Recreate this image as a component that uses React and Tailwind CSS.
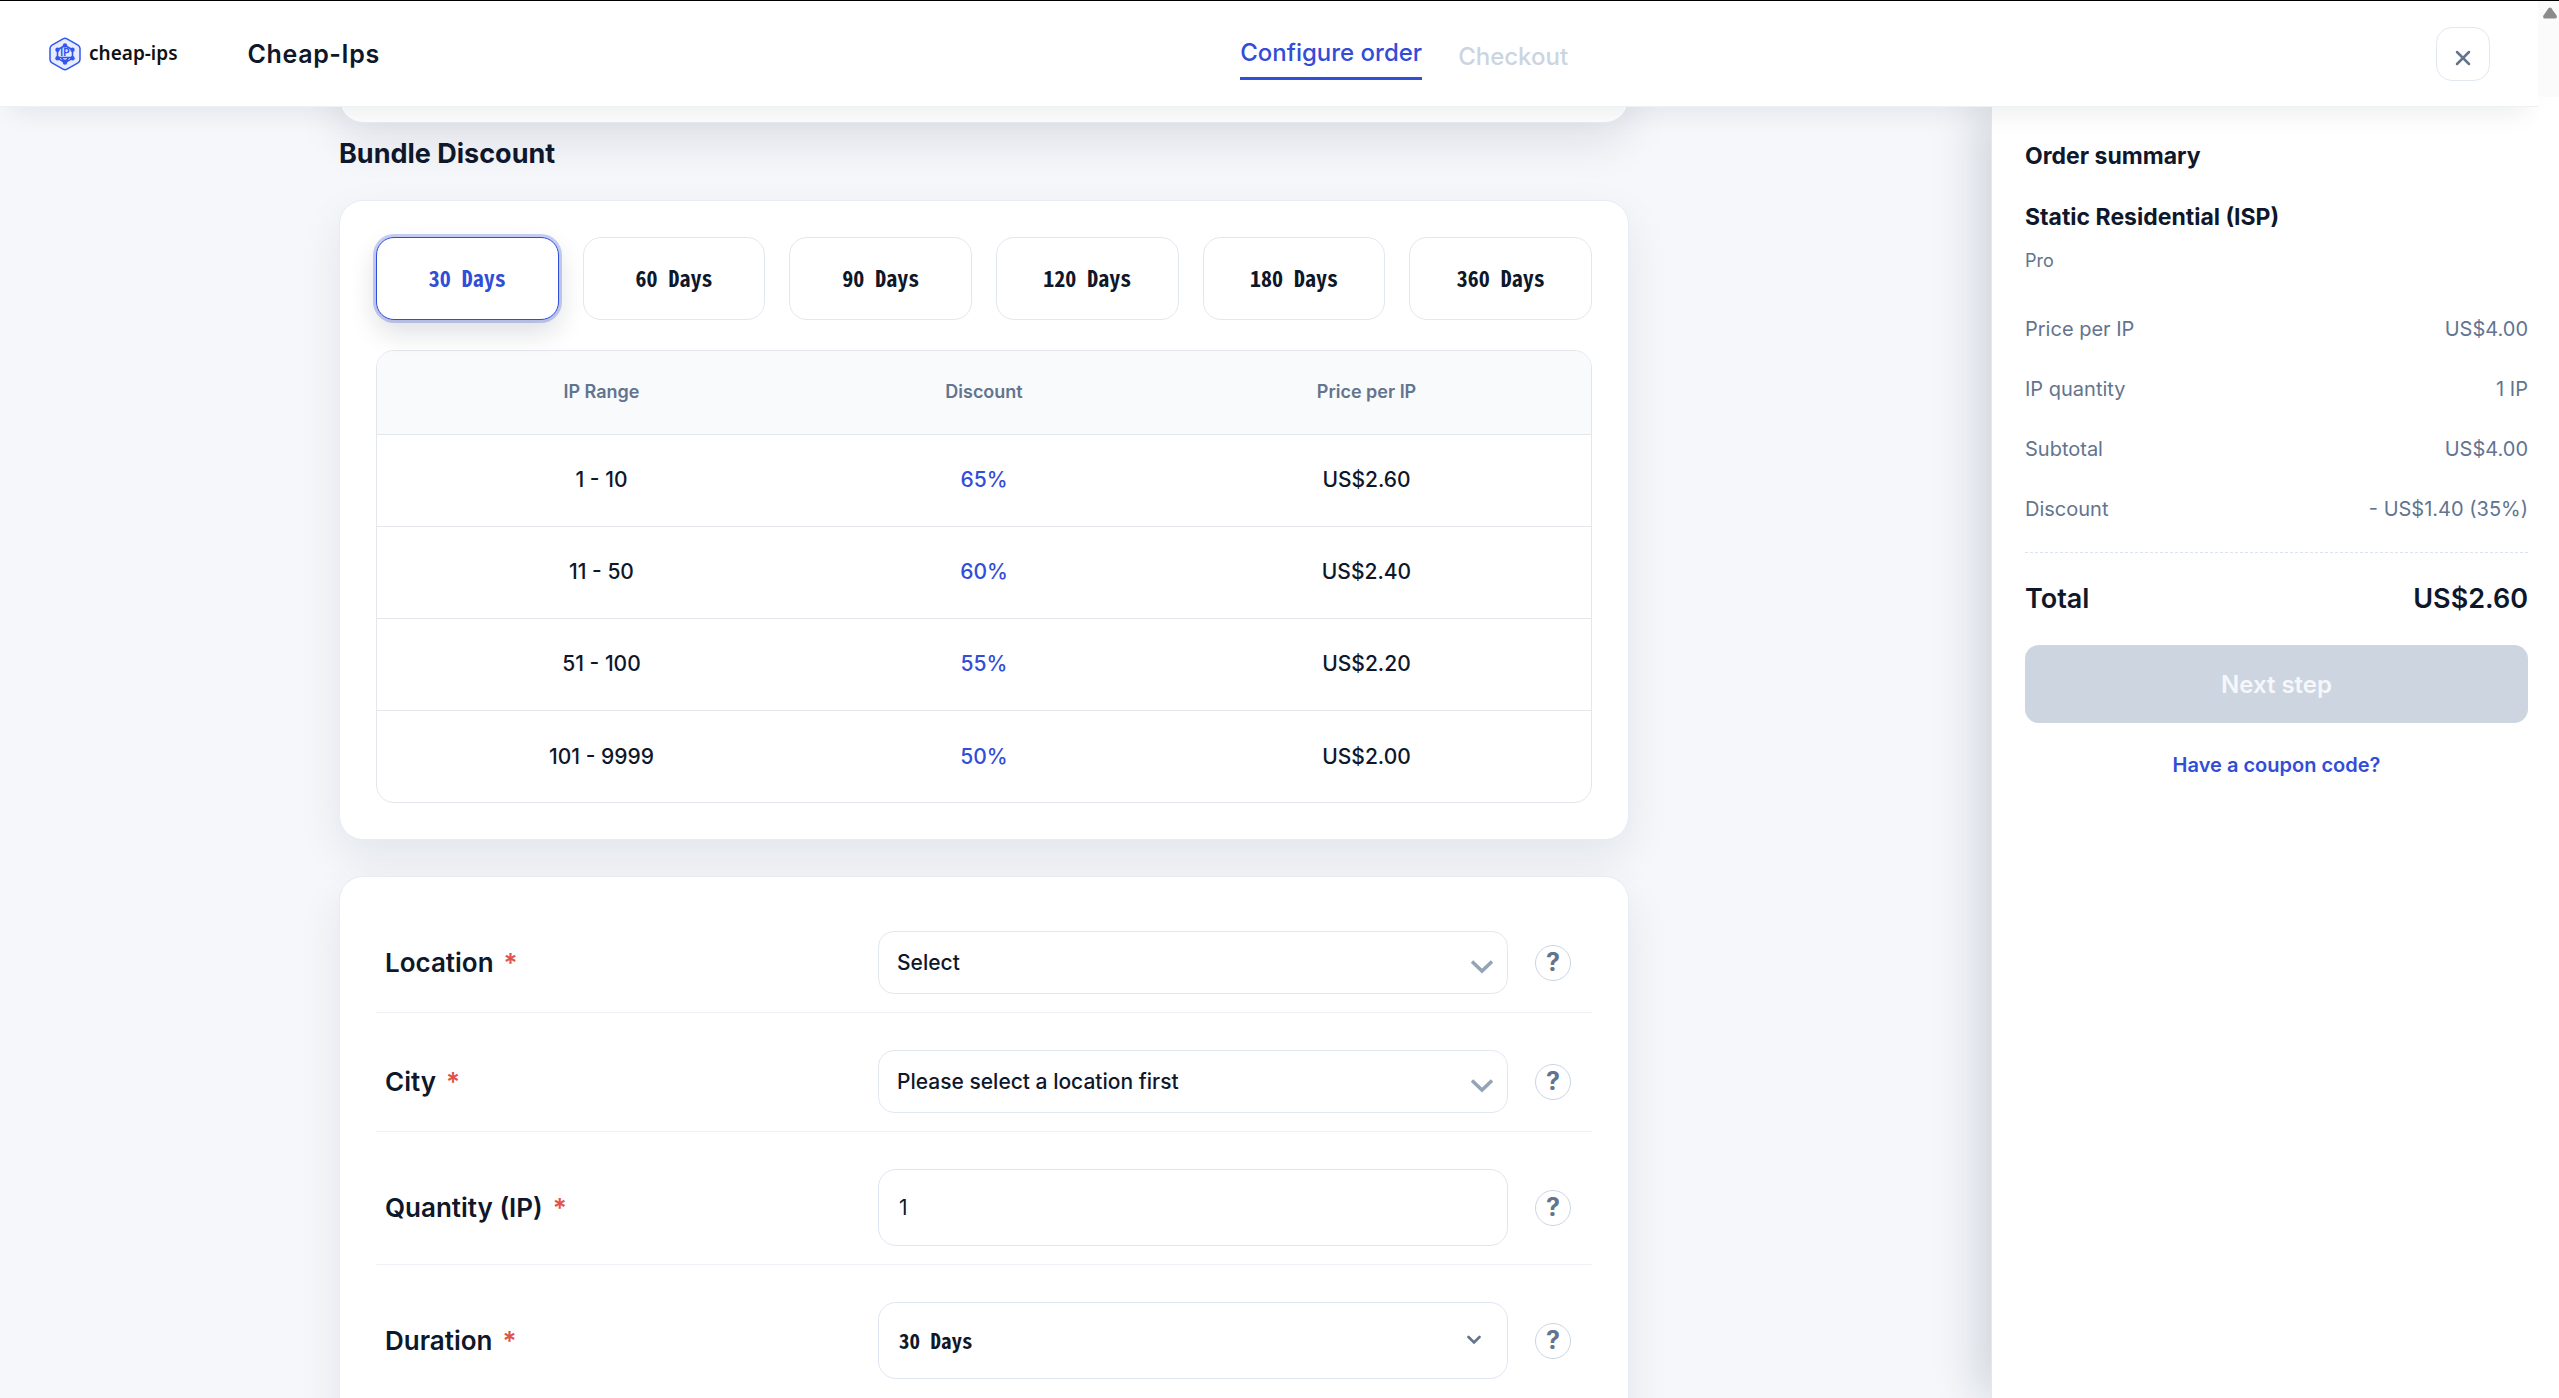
import React, { useState } from 'react';
import { X } from 'lucide-react';

const durations = ['30 Days', '60 Days', '90 Days', '120 Days', '180 Days', '360 Days'];

const tiers = [
    { range: '1 - 10', discount: '65%', price: 'US$2.60' },
    { range: '11 - 50', discount: '60%', price: 'US$2.40' },
    { range: '51 - 100', discount: '55%', price: 'US$2.20' },
    { range: '101 - 9999', discount: '50%', price: 'US$2.00' }
];

const summary = [
    { label: 'Price per IP', value: 'US$4.00' },
    { label: 'IP quantity', value: '1 IP' },
    { label: 'Subtotal', value: 'US$4.00' },
    { label: 'Discount', value: '- US$1.40 (35%)' }
];

const Logo = () => (
    <svg width="32" height="34" viewBox="0 0 32 34" fill="none">
        <path d="M14 1.8a4 4 0 0 1 4 0l11 6.4a4 4 0 0 1 2 3.4v10.8a4 4 0 0 1-2 3.4l-11 6.4a4 4 0 0 1-4 0L3 25.8a4 4 0 0 1-2-3.4V11.6a4 4 0 0 1 2-3.4z" fill="#e8edfd" stroke="#3355f0" strokeWidth="1.5" />
        <path d="M16 8.5l7.5 4.3v8.6L16 25.7l-7.5-4.300v-8.600zM9 20.500h14M12 20.500q4 6 8 0" stroke="#3355f0" strokeWidth="1.6" />
        <g fill="#3355f0">
            <circle cx="16" cy="8.5" r="2.2" />
            <circle cx="23.5" cy="12.8" r="2.2" />
            <circle cx="23.5" cy="21.3" r="2.2" />
            <circle cx="16" cy="25.5" r="2.2" />
            <circle cx="8.5" cy="21.3" r="2.2" />
            <circle cx="8.5" cy="12.8" r="2.2" />
        </g>
        <text x="16" y="19" textAnchor="middle" fill="#3355f0" className="font-['Inter'] text-[10px] font-bold">IP</text>
    </svg>
);

const Header = () => (
    <header className="relative z-10 flex h-[107px] border-t border-t-black bg-white">
        <div className="flex flex-1 items-center border-b border-b-[#eef0f4] bg-white pl-[49px] pr-12 shadow-[0_18px_24px_-12px_rgba(15,23,42,0.08)]">
            <div className="flex w-[48.8%] items-center">
                <a href="#" className="flex items-center gap-2">
                    <Logo />
                    <span className="font-['Noto_Sans'] text-[19px] font-semibold text-[#111]">cheap-ips</span>
                </a>
                <span className="ml-[70px] pt-[3px] text-[25px] font-semibold tracking-wide">Cheap-Ips</span>
            </div>
            <nav className="flex flex-1 items-center gap-9 pt-1.5 text-2xl font-medium">
                <a href="#" className="border-b-[3px] border-[#324dd8] pb-2 pt-1 text-[#324dd8]">Configure order</a>
                <a href="#" className="text-[#cbd5e1]">Checkout</a>
            </nav>
            <button aria-label="Close" className="flex h-[54px] w-[54px] items-center justify-center rounded-2xl border border-slate-200 pt-2 text-slate-500">
                <X size={24} strokeWidth={2.5} />
            </button>
        </div>
        <div className="h-24 w-[21px] bg-[#fbfbfb] pt-1.5">
            <svg width="16" height="12" viewBox="0 0 16 12" className="ml-1">
                <path d="M6.6 1.2q1.4-1.4 2.8 0l5.200 7.300q1 3-1.600 3H3q-2.600 0-1.600-3z" fill="#8b8b8b" />
            </svg>
        </div>
    </header>
);

const DurationPicker = ({ value, onChange }) => (
    <div className="grid grid-cols-6 gap-6">
        {durations.map((d) => (
            <button
                key={d}
                onClick={() => onChange(d)}
                className={`h-[83px] rounded-[18px] border bg-white pb-0.5 font-['Noto_Sans_Mono_CJK_SC','Liberation_Mono',monospace] text-[22px] font-bold ${d === value
                        ? 'border-[#324dd8] text-[#324dd8] shadow-[0_0_0_3px_rgba(50,77,216,0.27),0_12px_28px_rgba(15,23,42,0.14)]'
                        : 'border-slate-200'
                    }`}
            >
                {d}
            </button>
        ))}
    </div>
);

const TierTable = () => (
    <div className="mt-[30px] overflow-hidden rounded-[18px] border border-[#e3e7ec]">
        <table className="w-full table-fixed text-center">
            <thead className="bg-[#f8fafc] text-lg text-slate-500">
                <tr className="h-[83px]">
                    <th className="w-[417px] pl-8 font-semibold">IP Range</th>
                    <th className="font-semibold">Discount</th>
                    <th className="w-[417px] pr-8 font-semibold">Price per IP</th>
                </tr>
            </thead>
            <tbody className="text-[21px] font-medium">
                {tiers.map((tier) => (
                    <tr key={tier.range} className="h-[92px] border-t border-[#e3e7ec]">
                        <td className="pl-8">{tier.range}</td>
                        <td className="text-[#324dd8]">{tier.discount}</td>
                        <td className="pr-8">{tier.price}</td>
                    </tr>
                ))}
            </tbody>
        </table>
    </div>
);

const Field = ({ id, label, children }) => (
    <div className="flex items-center border-b border-[#eef1f6] pb-[18px] pt-[37px] last:border-b-0">
        <label htmlFor={id} className="flex-1 pl-[9px] text-[26px] font-semibold">
            {label}<span className="ml-2.5 text-[#e0524a]">*</span>
        </label>
        <div className="relative w-[630px]">{children}</div>
        <button aria-label={`Help: ${label}`} className="ml-[27px] mr-[21px] flex h-9 w-9 items-center justify-center rounded-full border border-slate-300 text-[25px] font-bold text-slate-500">
            ?
        </button>
    </div>
);

const Chevron = () => (
    <svg width="22" height="14" viewBox="0 0 22 14" fill="none" className="pointer-events-none absolute right-[15px] top-[29px]">
        <path d="M1 1.5l10 9.5 10-9.5" stroke="#94a3b8" strokeWidth="3.5" />
    </svg>
);

const selectClass = 'block h-[63px] w-full appearance-none rounded-2xl border border-slate-200 bg-white pl-[18px] text-[21px] font-medium';

const OrderForm = ({ duration, onDuration }) => (
    <form className="mt-9 rounded-3xl border border-[#e6ebf4] bg-white px-9 pb-10 pt-[17px] shadow-[0_18px_45px_rgba(15,23,42,0.08)]">
        <Field id="location" label="Location">
            <select id="location" className={selectClass}>
                <option>Select</option>
            </select>
            <Chevron />
        </Field>
        <Field id="city" label="City">
            <select id="city" className={selectClass}>
                <option>Please select a location first</option>
            </select>
            <Chevron />
        </Field>
        <Field id="quantity" label="Quantity (IP)">
            <input id="quantity" type="text" defaultValue="1" className="block h-[77px] w-full rounded-[18px] border border-[#dfe5f3] bg-white pl-5 text-[21px]" />
        </Field>
        <Field id="duration" label="Duration">
            <select
                id="duration"
                value={duration}
                onChange={(e) => onDuration(e.target.value)}
                className="block h-[77px] w-full appearance-none rounded-[18px] border border-[#dfe5f3] bg-white pl-5 font-['Noto_Sans_Mono_CJK_SC','Liberation_Mono',monospace] text-[21px] font-bold"
            >
                {durations.map((d) => <option key={d}>{d}</option>)}
            </select>
            <svg width="14" height="10" viewBox="0 0 14 10" fill="none" className="pointer-events-none absolute right-[27px] top-[33px]">
                <path d="M1.5 2L7 7.5 12.5 2" stroke="#64748b" strokeWidth="2.6" strokeLinecap="round" />
            </svg>
        </Field>
    </form>
);

const OrderSummary = () => (
    <aside className="w-[568px] shrink-0 border-l border-[#e2e8f0] bg-white pl-[33px] pr-[31px] pt-[31px] shadow-[-12px_0_45px_rgba(15,23,42,0.16)]">
        <h2 className="text-[23px] font-bold leading-9">Order summary</h2>
        <h3 className="mt-[25px] text-[23px] font-bold leading-9">Static Residential (ISP)</h3>
        <p className="mt-2 text-lg leading-9 text-slate-500">Pro</p>
        <dl className="mt-5 border-b border-dashed border-[#dbe3ec] pb-[13px] text-xl text-slate-500">
            {summary.map((row) => (
                <div key={row.label} className="flex h-[60px] items-center justify-between">
                    <dt>{row.label}</dt>
                    <dd>{row.value}</dd>
                </div>
            ))}
        </dl>
        <div className="flex items-center justify-between py-[26px] text-[27px] font-semibold leading-10">
            <span>Total</span>
            <span>US$2.60</span>
        </div>
        <button disabled className="h-[78px] w-full rounded-[14px] bg-[#cdd5e0] pt-0.5 text-2xl font-semibold text-[#f5f7fa]">Next step</button>
        <a href="#" className="mt-7 block text-center text-xl font-semibold text-[#324dd8]">Have a coupon code?</a>
    </aside>
);

const App = () => {
    const [duration, setDuration] = useState('30 Days');

    return (
        <div className="flex h-screen flex-col overflow-hidden bg-[#f5f7fb] font-['Inter',sans-serif] text-[#0f172a]">
            <Header />
            <div className="flex min-h-0 flex-1">
                <main className="min-w-0 flex-1 overflow-hidden pl-8 pr-[55px]">
                    <div className="mx-auto max-w-[1290px]">
                        {/* bottom edge of the plan card, scrolled under the header */}
                        <div className="-mt-10 h-14 rounded-3xl border border-[#e6ebf4] bg-white shadow-[0_18px_45px_rgba(15,23,42,0.1)]" />
                        <h1 className="mt-[13px] text-[27px] font-bold leading-9">Bundle Discount</h1>
                        <section className="mt-7 rounded-3xl border border-[#e6ebf4] bg-white p-9 shadow-[0_18px_45px_rgba(15,23,42,0.08)]">
                            <DurationPicker value={duration} onChange={setDuration} />
                            <TierTable />
                        </section>
                        <OrderForm duration={duration} onDuration={setDuration} />
                    </div>
                </main>
                <OrderSummary />
            </div>
        </div>
    );
};

export default App;
